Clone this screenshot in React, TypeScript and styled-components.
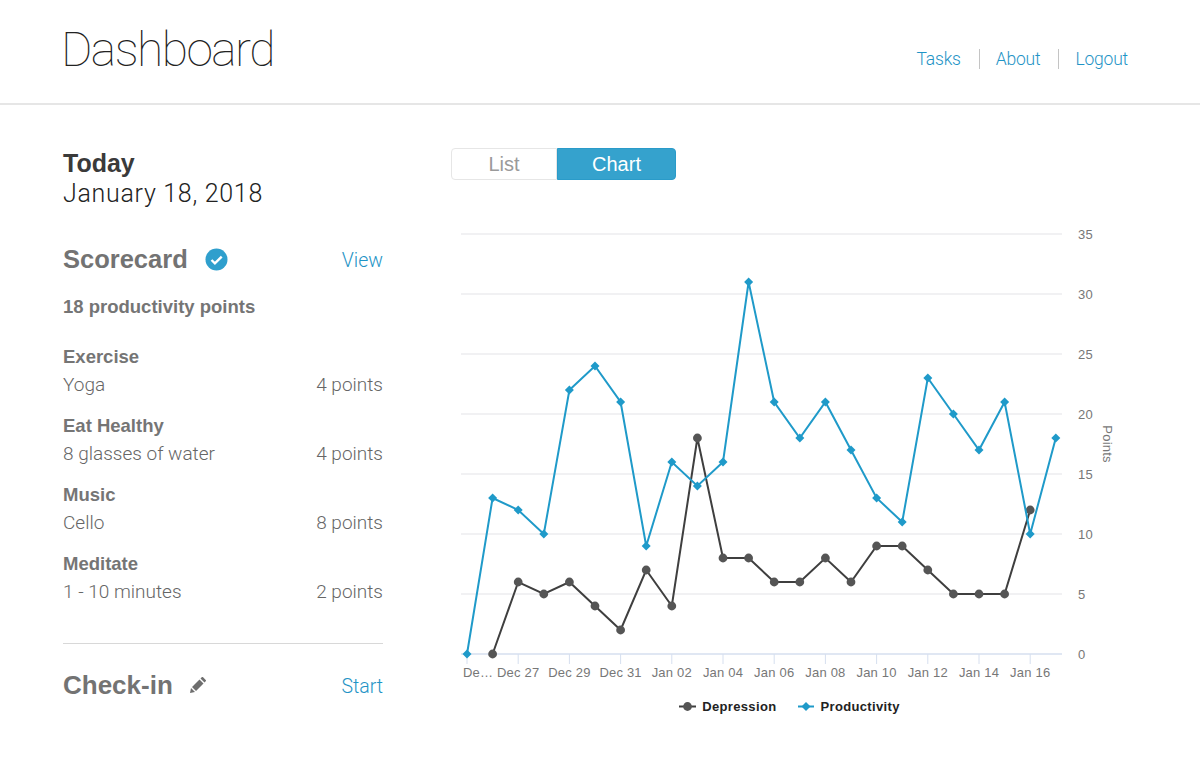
import React from "react";
import styled, { createGlobalStyle } from "styled-components";

const GlobalStyle = createGlobalStyle`
    html, body {
        margin: 0;
        padding: 0;
        background: #fff;
        font-family: "Liberation Sans", Arial, sans-serif;
    }
`;

const BLUE = "#1f94c6";
const LIGHT = `Roboto, "Liberation Sans", sans-serif`;

const Header = styled.header`
    display: flex;
    justify-content: space-between;
    align-items: center;
    height: 103px;
    padding: 0 72px 0 61px;
    border-bottom: 2px solid #e6e6e6;
`;

const Title = styled.h1`
    margin: 0 0 4px;
    font-family: Roboto, sans-serif;
    font-weight: 100;
    font-size: 48px;
    line-height: 56px;
    letter-spacing: -1.55px;
    color: #222;
`;

const Nav = styled.nav`
    display: flex;
    align-items: center;
    margin-top: 15px;
`;

const NavLink = styled.a<{ $divider?: boolean }>`
    font-family: ${LIGHT};
    font-weight: 300;
    font-size: 17.5px;
    line-height: 20px;
    letter-spacing: -0.2px;
    color: ${BLUE};
    padding-left: ${(p) => (p.$divider ? "16px" : "0")};
    margin-left: ${(p) => (p.$divider ? "18px" : "0")};
    border-left: ${(p) => (p.$divider ? "1px solid #c4c4c4" : "none")};
`;

const Main = styled.main`
    display: flex;
    padding: 43px 0 0 63px;
`;

const Sidebar = styled.aside`
    width: 320px;
    flex-shrink: 0;
`;

const TodayLabel = styled.div`
    font-weight: 700;
    font-size: 25px;
    line-height: 31px;
    color: #3a3a3a;
`;

const DateLabel = styled.div`
    font-family: ${LIGHT};
    font-weight: 300;
    font-size: 25px;
    line-height: 30px;
    letter-spacing: 0.7px;
    color: #222;
`;

const SectionRow = styled.div<{ $top: number }>`
    display: flex;
    justify-content: space-between;
    align-items: center;
    margin-top: ${(p) => p.$top}px;
`;

const SectionTitle = styled.h2<{ $gap: number; $size: number }>`
    display: flex;
    align-items: center;
    gap: ${(p) => p.$gap}px;
    margin: 0;
    font-weight: 700;
    font-size: ${(p) => p.$size}px;
    line-height: 32px;
    color: #737373;
`;

const ActionLink = styled.a`
    margin-top: 2px;
    font-family: ${LIGHT};
    font-weight: 300;
    font-size: 19.5px;
    color: ${BLUE};
`;

const PointsTotal = styled.div`
    margin-top: 20px;
    font-weight: 700;
    font-size: 18.5px;
    line-height: 24px;
    color: #757575;
`;

const Habits = styled.div`
    margin-top: 24px;
`;

const Habit = styled.div`
    height: 69px;
`;

const HabitName = styled.div`
    font-weight: 700;
    font-size: 18.5px;
    line-height: 28px;
    color: #757575;
`;

const HabitRow = styled.div`
    display: flex;
    justify-content: space-between;
    font-family: ${LIGHT};
    font-weight: 300;
    font-size: 19px;
    line-height: 28px;
    color: #666;
`;

const Divider = styled.hr`
    margin: 24px 0 0;
    border: 0;
    border-top: 1px solid #d8d8d8;
`;

const ChartColumn = styled.section`
    margin-left: 68px;
    width: 680px;
`;

const Toggle = styled.div`
    display: flex;
    width: 225px;
    height: 32px;
`;

const ToggleButton = styled.button<{ $active?: boolean }>`
    width: ${(p) => (p.$active ? "119px" : "106px")};
    padding: 0;
    font-family: "Liberation Sans", sans-serif;
    font-size: 20px;
    color: ${(p) => (p.$active ? "#fff" : "#9a9a9a")};
    background: ${(p) => (p.$active ? "#35a2cd" : "#fff")};
    border: 1px solid ${(p) => (p.$active ? "#2a9bc9" : "#e6e6e6")};
    border-radius: ${(p) => (p.$active ? "0 4px 4px 0" : "4px 0 0 4px")};
`;

const ChartSvg = styled.svg`
    display: block;
    margin-top: 38px;
    overflow: visible;
`;

const AxisText = styled.text`
    font-family: "Liberation Sans", sans-serif;
    font-size: 13px;
    letter-spacing: 0.2px;
    fill: #777;
`;

const Legend = styled.div`
    display: flex;
    justify-content: center;
    gap: 22px;
    width: 680px;
    margin-top: 11px;
    padding-right: 3px;
    box-sizing: border-box;
`;

const LegendItem = styled.div`
    display: flex;
    align-items: center;
    gap: 6px;
    font-weight: 700;
    font-size: 13px;
    letter-spacing: 0.35px;
    color: #222;
`;

const depression: (number | null)[] = [null, 0, 6, 5, 6, 4, 2, 7, 4, 18, 8, 8, 6, 6, 8, 6, 9, 9, 7, 5, 5, 5, 12, null];
const productivity = [0, 13, 12, 10, 22, 24, 21, 9, 16, 14, 16, 31, 21, 18, 21, 17, 13, 11, 23, 20, 17, 21, 10, 18];
const ticks = ["De…", "Dec 27", "Dec 29", "Dec 31", "Jan 02", "Jan 04", "Jan 06", "Jan 08", "Jan 10", "Jan 12", "Jan 14", "Jan 16"];
const yTicks = [0, 5, 10, 15, 20, 25, 30, 35];

// svg origin sits at page x=451, y=218
const xAt = (i: number) => 16 + i * 25.6;
const yAt = (v: number) => 436 - v * 12;

const linePoints = (data: (number | null)[]) =>
    data
        .map((v, i) => (v === null ? null : `${xAt(i)},${yAt(v)}`))
        .filter(Boolean)
        .join(" ");

const Diamond = ({ x, y }: { x: number; y: number }) => (
    <polygon points={`${x},${y - 4.5} ${x + 4.5},${y} ${x},${y + 4.5} ${x - 4.5},${y}`} fill="#1f9ac9" />
);

const Chart = () => (
    <ChartSvg width={680} height={470} viewBox="0 0 680 470">
        {yTicks.map((t) => (
            <g key={t}>
                <line x1={10} x2={611} y1={yAt(t)} y2={yAt(t)} stroke={t === 0 ? "#d6dfef" : "#ececef"} strokeWidth={1.5} />
                <AxisText x={627} y={yAt(t) + 4.5} textAnchor="start">{t}</AxisText>
            </g>
        ))}
        {ticks.map((t, i) => (
            <g key={t}>
                <line x1={xAt(i * 2)} x2={xAt(i * 2)} y1={436} y2={446} stroke="#d6dfef" strokeWidth={1} />
                <AxisText x={i === 0 ? 12 : xAt(i * 2)} y={459} textAnchor={i === 0 ? "start" : "middle"}>{t}</AxisText>
            </g>
        ))}
        <AxisText x={0} y={0} textAnchor="middle" transform="translate(652,226) rotate(90)">Points</AxisText>
        <polyline points={linePoints(depression)} fill="none" stroke="#3f3f3f" strokeWidth={2} />
        {depression.map((v, i) => (v === null ? null : <circle key={i} cx={xAt(i)} cy={yAt(v)} r={4.4} fill="#555" />))}
        <polyline points={linePoints(productivity)} fill="none" stroke="#1f9ac9" strokeWidth={2} />
        {productivity.map((v, i) => <Diamond key={i} x={xAt(i)} y={yAt(v)} />)}
    </ChartSvg>
);

const CheckBadge = () => (
    <svg width="23" height="23" viewBox="0 0 23 23">
        <circle cx="11.5" cy="11.5" r="11" fill="#2f9fcd" />
        <path d="M6.5 12l3.4 3.4 6.8-6.8" fill="none" stroke="#fff" strokeWidth="2.4" />
    </svg>
);

const Pencil = () => (
    <svg width="16" height="16" viewBox="0 0 16 16">
        <path d="M0 16l1-5 4 4zM2 10l7.5-7.5 4 4L6 14zM10.5 1.5l1.2-1.2a1 1 0 0 1 1.4 0l2.6 2.6a1 1 0 0 1 0 1.4l-1.2 1.2z" fill="#6e6e6e" />
    </svg>
);

const habits = [
    { name: "Exercise", detail: "Yoga", points: "4 points" },
    { name: "Eat Healthy", detail: "8 glasses of water", points: "4 points" },
    { name: "Music", detail: "Cello", points: "8 points" },
    { name: "Meditate", detail: "1 - 10 minutes", points: "2 points" },
];

const App = () => (
    <React.Fragment>
        <GlobalStyle />
        <Header>
            <Title>Dashboard</Title>
            <Nav>
                <NavLink>Tasks</NavLink>
                <NavLink $divider>About</NavLink>
                <NavLink $divider>Logout</NavLink>
            </Nav>
        </Header>
        <Main>
            <Sidebar>
                <TodayLabel>Today</TodayLabel>
                <DateLabel>January 18, 2018</DateLabel>
                <SectionRow $top={34}>
                    <SectionTitle $gap={17} $size={25.5}>Scorecard <CheckBadge /></SectionTitle>
                    <ActionLink>View</ActionLink>
                </SectionRow>
                <PointsTotal>18 productivity points</PointsTotal>
                <Habits>
                    {habits.map((h) => (
                        <Habit key={h.name}>
                            <HabitName>{h.name}</HabitName>
                            <HabitRow>
                                <span>{h.detail}</span>
                                <span>{h.points}</span>
                            </HabitRow>
                        </Habit>
                    ))}
                </Habits>
                <Divider />
                <SectionRow $top={25}>
                    <SectionTitle $gap={17} $size={26}>Check-in <Pencil /></SectionTitle>
                    <ActionLink>Start</ActionLink>
                </SectionRow>
            </Sidebar>
            <ChartColumn>
                <Toggle>
                    <ToggleButton>List</ToggleButton>
                    <ToggleButton $active>Chart</ToggleButton>
                </Toggle>
                <Chart />
                <Legend>
                    <LegendItem>
                        <svg width="17" height="9" viewBox="0 0 17 9">
                            <line x1="0" x2="17" y1="4.5" y2="4.5" stroke="#3f3f3f" strokeWidth="2" />
                            <circle cx="8.5" cy="4.5" r="4.4" fill="#555" />
                        </svg>
                        Depression
                    </LegendItem>
                    <LegendItem>
                        <svg width="16" height="9" viewBox="0 0 16 9">
                            <line x1="0" x2="16" y1="4.5" y2="4.5" stroke="#1f9ac9" strokeWidth="2" />
                            <Diamond x={8} y={4.5} />
                        </svg>
                        Productivity
                    </LegendItem>
                </Legend>
            </ChartColumn>
        </Main>
    </React.Fragment>
);

export default App;
